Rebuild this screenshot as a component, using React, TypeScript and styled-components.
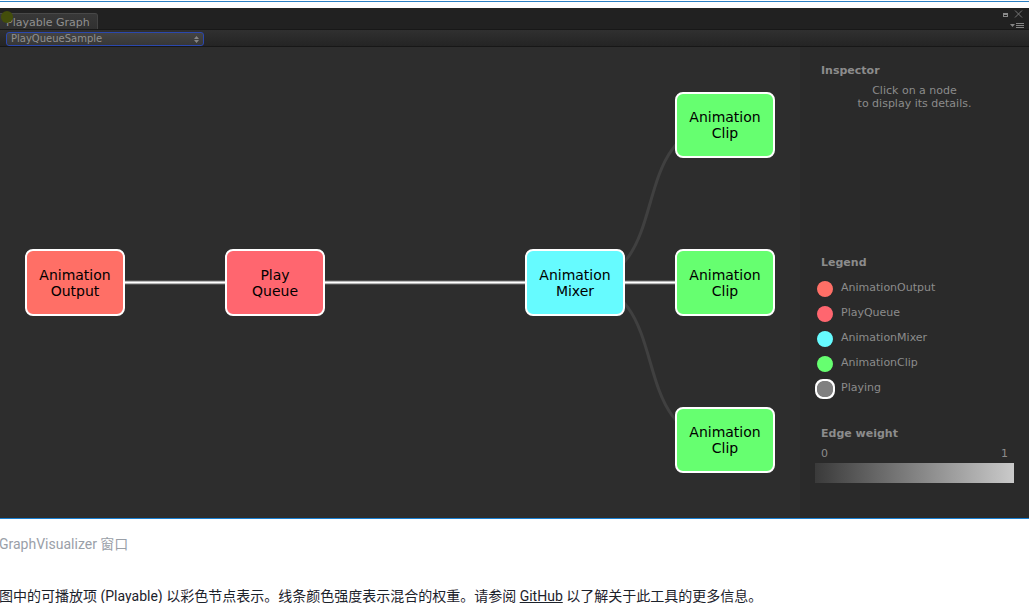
import React from "react";
import styled, { createGlobalStyle } from "styled-components";

const GlobalStyle = createGlobalStyle`
  *, *::before, *::after { box-sizing: border-box; }
  body {
    margin: 0;
    background: #fff;
    font-family: Roboto, "Noto Sans CJK SC", sans-serif;
  }
`;

const Page = styled.main`
  padding-top: 1px;
`;

const Figure = styled.figure`
  margin: 0;
`;

const Frame = styled.div`
  padding-top: 6px;
  border-top: 1px solid #2a80c4;
  border-bottom: 1px solid #1a7fd0;
`;

const Window = styled.section`
  background: #2a2a2a;
  color: #8c8c8c;
  font-family: "DejaVu Sans", sans-serif;
  font-size: 11px;
`;

const TitleBar = styled.header`
  display: flex;
  justify-content: space-between;
  height: 22px;
  padding-top: 5px;
  background: #212121;
  border-bottom: 1px solid #181818;
`;

const Tab = styled.button`
  position: relative;
  width: 98px;
  padding: 2px 0 0 6px;
  border: 0;
  border-top: 1px solid #484848;
  border-right: 1px solid #444;
  border-radius: 0 3px 0 0;
  background: linear-gradient(#383838, #303030);
  color: #909090;
  font: inherit;
  line-height: 14px;
  text-align: left;
  white-space: nowrap;
`;

const PointerDot = styled.span`
  position: absolute;
  top: -3px;
  left: 1px;
  width: 12px;
  height: 12px;
  border-radius: 50%;
  background: #434e0b;
`;

const WindowControls = styled.div`
  display: grid;
  grid-template-columns: 10px 10px;
  grid-template-rows: 8px 8px;
  gap: 4px 2px;
  margin-top: -3px;
  padding-right: 5px;
`;

const ControlButton = styled.button<{ $wide?: boolean }>`
  display: flex;
  align-items: center;
  justify-content: flex-end;
  padding: 0;
  border: 0;
  background: none;
  grid-column: ${(p) => (p.$wide ? "1 / 3" : "auto")};
`;

const Toolbar = styled.div`
  display: flex;
  height: 17px;
  padding: 2px 6px 0;
  background: linear-gradient(#303030, #242424);
  border-bottom: 1px solid #171717;
`;

const SelectBox = styled.div`
  position: relative;
  display: flex;
`;

const GraphSelect = styled.select`
  appearance: none;
  width: 198px;
  height: 14px;
  padding: 0 16px 0 4px;
  border: 1px solid #2b48ae;
  border-radius: 3px;
  outline: 0;
  background: linear-gradient(#444, #373737);
  color: #909090;
  font: 10px/12px "DejaVu Sans", sans-serif;
`;

const SelectArrows = styled.svg`
  position: absolute;
  top: 4px;
  right: 5px;
  pointer-events: none;
`;

const Workspace = styled.div`
  display: flex;
`;

const Canvas = styled.div`
  position: relative;
  flex: 1;
  min-width: 0;
  height: 471px;
  overflow: hidden;
  background: #2d2d2d;
`;

const Edges = styled.svg`
  position: absolute;
  inset: 0;
  width: 100%;
  height: 100%;
  fill: none;
`;

const Node = styled.button<{ $x: number; $y: number; $h: number; $color: string }>`
  position: absolute;
  left: ${(p) => p.$x}px;
  top: ${(p) => p.$y}px;
  width: 100px;
  height: ${(p) => p.$h}px;
  padding: 0;
  border: 2px solid #fff;
  border-radius: 8px;
  background: ${(p) => p.$color};
  color: #000;
  font: 14px/16px "DejaVu Sans", sans-serif;
  text-align: center;
  white-space: pre-line;
`;

const Sidebar = styled.aside`
  width: 229px;
  padding: 16px 15px 0;
  background: #2a2a2a;
`;

const Panel = styled.section<{ $height?: number }>`
  min-height: ${(p) => p.$height ?? 0}px;
`;

const PanelTitle = styled.h2`
  margin: 0;
  padding-left: 6px;
  font-size: 11px;
  line-height: 16px;
`;

const Hint = styled.p`
  margin: 5px 0 0;
  line-height: 13px;
  text-align: center;
`;

const LegendList = styled.ul`
  margin: 8px 0 0;
  padding: 0;
  list-style: none;
`;

const LegendItem = styled.li`
  display: flex;
  align-items: flex-start;
  gap: 6px;
  height: 25px;
  line-height: 18px;
`;

const Swatch = styled.span<{ $color: string; $ring?: boolean }>`
  width: 20px;
  height: 20px;
  border: 2px solid ${(p) => (p.$ring ? "#fff" : "transparent")};
  border-radius: ${(p) => (p.$ring ? 8 : 10)}px;
  background: radial-gradient(circle, ${(p) => p.$color} 8px, ${(p) => (p.$ring ? "#fff" : "transparent")} 9px);
  background-clip: ${(p) => (p.$ring ? "border-box" : "padding-box")};
`;

const Scale = styled.div`
  display: flex;
  justify-content: space-between;
  margin-top: 4px;
  padding: 0 6px;
  line-height: 16px;
`;

const WeightBar = styled.div`
  height: 20px;
  margin-top: 1px;
  background: linear-gradient(90deg, #3a3a3a, #cacaca);
`;

const Caption = styled.figcaption`
  margin-left: -1px;
  padding-top: 15px;
  color: #9aa0a8;
  font-size: 14px;
  line-height: 20px;
`;

const Paragraph = styled.p`
  margin: 32px 0 0 -1px;
  color: #1c222b;
  font-size: 14px;
  line-height: 20px;
`;

const Link = styled.a`
  color: inherit;
  text-decoration: underline;
`;

const nodes = [
  { x: 25, y: 202, h: 67, color: "#ff6f66", label: "Animation\nOutput" },
  { x: 225, y: 202, h: 67, color: "#ff666f", label: "Play\nQueue" },
  { x: 525, y: 202, h: 67, color: "#66fbff", label: "Animation\nMixer" },
  { x: 675, y: 45, h: 66, color: "#66ff70", label: "Animation\nClip" },
  { x: 675, y: 202, h: 67, color: "#66ff70", label: "Animation\nClip" },
  { x: 675, y: 360, h: 66, color: "#66ff70", label: "Animation\nClip" },
];

const legend = [
  { color: "#ff6f66", label: "AnimationOutput" },
  { color: "#ff666f", label: "PlayQueue" },
  { color: "#66fbff", label: "AnimationMixer" },
  { color: "#66ff70", label: "AnimationClip" },
  { color: "#808080", label: "Playing", ring: true },
];

export default function App() {
  return (
    <Page>
      <GlobalStyle />
      <Figure>
        <Frame>
          <Window>
            <TitleBar>
              <Tab type="button">
                Playable Graph
                <PointerDot />
              </Tab>
              <WindowControls>
                <ControlButton type="button" aria-label="Maximize">
                  <svg width="10" height="8">
                    <path d="M1 3h5v4h-5zM2 5v1h3v-1z" fill="#8a8a8a" fillRule="evenodd" />
                  </svg>
                </ControlButton>
                <ControlButton type="button" aria-label="Close">
                  <svg width="10" height="8">
                    <path d="M1 0.5l7 7M8 0.5l-7 7" stroke="#777" fill="none" />
                  </svg>
                </ControlButton>
                <ControlButton type="button" aria-label="Window menu" $wide>
                  <svg width="14" height="8">
                    <path d="M0 2h5L2.5 5z" fill="#858585" />
                    <path d="M6 1.5h8M6 3.5h8M6 5.5h8" stroke="#858585" />
                  </svg>
                </ControlButton>
              </WindowControls>
            </TitleBar>
            <Toolbar>
              <SelectBox>
                <GraphSelect aria-label="Graph" defaultValue="PlayQueueSample">
                  <option>PlayQueueSample</option>
                </GraphSelect>
                <SelectArrows width="5" height="7" aria-hidden="true">
                  <path d="M2.5 0L5 3H0zM2.5 7L5 4H0z" fill="#858585" />
                </SelectArrows>
              </SelectBox>
            </Toolbar>
            <Workspace>
              <Canvas>
                <Edges aria-hidden="true">
                  <path d="M575 235C680 235 620 78 725 78" stroke="#404040" strokeWidth="3" />
                  <path d="M575 236C680 236 620 393 725 393" stroke="#404040" strokeWidth="3" />
                  <path d="M75 235.5H725" stroke="#757575" strokeWidth="4" />
                  <path d="M75 235.5H725" stroke="#fff" strokeWidth="2" />
                </Edges>
                {nodes.map((n, i) => (
                  <Node key={i} type="button" $x={n.x} $y={n.y} $h={n.h} $color={n.color}>
                    {n.label}
                  </Node>
                ))}
              </Canvas>
              <Sidebar>
                <Panel $height={192}>
                  <PanelTitle>Inspector</PanelTitle>
                  <Hint>
                    Click on a node
                    <br />
                    to display its details.
                  </Hint>
                </Panel>
                <Panel $height={171}>
                  <PanelTitle>Legend</PanelTitle>
                  <LegendList>
                    {legend.map((l) => (
                      <LegendItem key={l.label}>
                        <Swatch $color={l.color} $ring={l.ring} />
                        {l.label}
                      </LegendItem>
                    ))}
                  </LegendList>
                </Panel>
                <Panel>
                  <PanelTitle>Edge weight</PanelTitle>
                  <Scale>
                    <span>0</span>
                    <span>1</span>
                  </Scale>
                  <WeightBar />
                </Panel>
              </Sidebar>
            </Workspace>
          </Window>
        </Frame>
        <Caption>GraphVisualizer 窗口</Caption>
      </Figure>
      <Paragraph>
        图中的可播放项 (Playable) 以彩色节点表示。线条颜色强度表示混合的权重。请参阅 <Link href="#github">GitHub</Link>{" "}
        以了解关于此工具的更多信息。
      </Paragraph>
    </Page>
  );
}
